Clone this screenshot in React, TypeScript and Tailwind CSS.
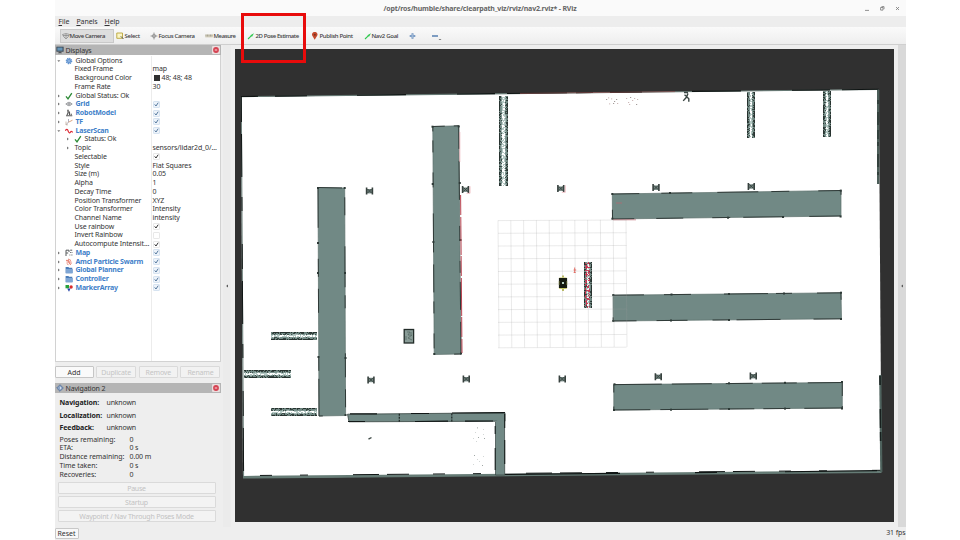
import React from "react";

type Row = {
  label: string;
  value?: string;
  check?: "blue" | "dark" | "empty";
  display?: boolean;
  arrow?: "open" | "closed";
  nested?: boolean;
  icon?: string;
  swatch?: boolean;
};

const rows: Row[] = [
  { label: "Global Options", arrow: "open", icon: "gear" },
  { label: "Fixed Frame", value: "map" },
  { label: "Background Color", value: "48; 48; 48", swatch: true },
  { label: "Frame Rate", value: "30" },
  { label: "Global Status: Ok", arrow: "closed", icon: "check" },
  { label: "Grid", arrow: "closed", icon: "grid", display: true, check: "blue" },
  { label: "RobotModel", arrow: "closed", icon: "robot", display: true, check: "blue" },
  { label: "TF", arrow: "closed", icon: "tf", display: true, check: "blue" },
  { label: "LaserScan", arrow: "open", icon: "laser", display: true, check: "blue" },
  { label: "Status: Ok", arrow: "closed", icon: "check", nested: true },
  { label: "Topic", arrow: "closed", nested: true, value: "sensors/lidar2d_0/..." },
  { label: "Selectable", check: "dark" },
  { label: "Style", value: "Flat Squares" },
  { label: "Size (m)", value: "0.05" },
  { label: "Alpha", value: "1" },
  { label: "Decay Time", value: "0" },
  { label: "Position Transformer", value: "XYZ" },
  { label: "Color Transformer", value: "Intensity" },
  { label: "Channel Name", value: "intensity" },
  { label: "Use rainbow", check: "dark" },
  { label: "Invert Rainbow", check: "empty" },
  { label: "Autocompute Intensit...", check: "dark" },
  { label: "Map", arrow: "closed", icon: "map", display: true, check: "blue" },
  { label: "Amcl Particle Swarm", arrow: "closed", icon: "swarm", display: true, check: "blue" },
  { label: "Global Planner", arrow: "closed", icon: "folder", display: true, check: "blue" },
  { label: "Controller", arrow: "closed", icon: "folder", display: true, check: "blue" },
  { label: "MarkerArray", arrow: "closed", icon: "markers", display: true, check: "blue" },
];

function RowIcon({ name }: { name: string }) {
  return (
    <svg viewBox="0 0 8 8" className="h-2 w-2 shrink-0" fill="none">
      {name === "gear" && (
        <>
          <circle cx="4" cy="4" r="2.7" stroke="#5b8fce" strokeWidth="1.2" strokeDasharray="1.3 .8" />
          <circle cx="4" cy="4" r="1.9" fill="#86aede" stroke="#5b8fce" />
        </>
      )}
      {name === "check" && <path d="M1 4.4 3 6.8 6.8 1.2" stroke="#2c8a35" strokeWidth="1.3" />}
      {name === "grid" && (
        <path d="M.8 4 4 2.1 7.2 4 4 5.9ZM2.4 3 5.6 5M5.6 3 2.4 5" stroke="#85888c" strokeWidth=".8" />
      )}
      {name === "robot" && (
        <>
          <path d="M3 1v3l-1 2M3 3h1.5v3" stroke="#555" strokeWidth="1.1" />
          <path d="M1 6.8h6.3M5.5 5.2h1.5" stroke="#555" strokeWidth="1.1" />
          <circle cx="3" cy="1.5" r=".9" fill="#777" />
        </>
      )}
      {name === "tf" && (
        <>
          <path d="M1 6.8 3.5 4V1" stroke="#a7a6b8" strokeWidth=".9" />
          <path d="M3.5 4.2 7.5 2.2" stroke="#d79a73" strokeWidth=".9" />
          <path d="M1 3.5v3.3h2" stroke="#bda58f" strokeWidth=".7" />
        </>
      )}
      {name === "laser" && (
        <path d="M.3 3.6C1.5 2 2.6 2 3 3.7S4.6 6.6 5.4 5.2 7 4.6 7.8 5.4" stroke="#dd2732" strokeWidth="1.2" />
      )}
      {name === "map" && (
        <path d="M1 7V1.2h3V3M1.2 4h2M5.2 1.2h2M5 3.5h.8M6.6 3.5h.8M4.5 6h.8M6.4 6h1" stroke="#55585a" strokeWidth="1" />
      )}
      {name === "swarm" && (
        <path d="M1 2.4h3M3 1l3 1.5M1.5 4h5M2 5.3l1.3 1.8M6.5 4.8 5 7M3.6 3l1 3" stroke="#e2705f" strokeWidth=".9" />
      )}
      {name === "folder" && (
        <>
          <path d="M.6 1h2.8l.7.8h3.2v5.4H.6Z" fill="#4a7cb9" />
          <path d="M1 3h6.8v4.2H1Z" fill="#7ea5d4" />
        </>
      )}
      {name === "markers" && (
        <>
          <path d="M.5 1h3.5v3.3H.5Z" fill="#26a13a" />
          <circle cx="6.1" cy="3" r="1.7" fill="#d92d2d" />
          <path d="M2.2 4.4h3.3L4 7.8Z" fill="#2443a8" />
        </>
      )}
    </svg>
  );
}

function Arrow({ open }: { open: boolean }) {
  return (
    <svg viewBox="0 0 4 4" className="h-1 w-1 shrink-0">
      <path d={open ? "M.3 1.3h3L1.8 3Z" : "M1 .5v3L2.8 2Z"} fill="#777" />
    </svg>
  );
}

function Check({ kind }: { kind: "blue" | "dark" | "empty" }) {
  return (
    <svg viewBox="0 0 7 7" className="h-[7px] w-[7px]" fill="none">
      <rect x=".5" y=".5" width="6" height="6" rx=".6" fill={kind === "blue" ? "#edf3fa" : "#fff"} stroke={kind === "blue" ? "#c9daec" : "#dedede"} strokeWidth=".7" />
      {kind !== "empty" && (
        <path d="M1.7 3.4 3 5 5.2 1.7" stroke={kind === "blue" ? "#55799e" : "#333"} strokeWidth="1" />
      )}
    </svg>
  );
}

function TreeRow({ row }: { row: Row }) {
  return (
    <div className="flex h-[8.74px] shrink-0 items-center">
      <div className={`flex h-full w-[96px] shrink-0 items-center border-r border-[#ececec] ${row.nested ? "pl-[10px]" : "pl-px"}`}>
        <div className="flex w-[8px] shrink-0 items-center">{row.arrow && <Arrow open={row.arrow === "open"} />}</div>
        {row.icon && <RowIcon name={row.icon} />}
        <span
          className={
            row.icon
              ? row.display
                ? "pl-[3px] font-bold tracking-[-0.22px] text-[#3f7fc9]"
                : "pl-[3px] tracking-[-0.17px]"
              : row.nested
                ? "pl-px tracking-[-0.1px]"
                : "pl-[10px] tracking-[-0.12px]"
          }
        >
          {row.label}
        </span>
      </div>
      <div className="flex items-center pl-px tracking-[-0.1px]">
        {row.check && <Check kind={row.check} />}
        {row.swatch && <span className="ml-px mr-[2px] h-[6px] w-[6px] bg-[#303030]" />}
        {row.value}
      </div>
    </div>
  );
}

function CloseBadge() {
  return (
    <svg viewBox="0 0 8 8" className="h-2 w-2">
      <rect width="8" height="8" rx="1" fill="#eadede" />
      <circle cx="4" cy="4" r="2.9" fill="#d54352" />
      <path d="M2.8 4h2.4" stroke="#f9dadd" strokeWidth="1" />
    </svg>
  );
}

function PanelHeader({ title, icon }: { title: string; icon: React.ReactNode }) {
  return (
    <div className="flex h-[10px] shrink-0 items-center justify-between bg-[#b5b5b5] pl-px pr-px">
      <div className="flex items-center gap-[2px]">
        {icon}
        <span className="pt-px tracking-[-0.15px]">{title}</span>
      </div>
      <CloseBadge />
    </div>
  );
}

function PoseArrow() {
  return (
    <svg viewBox="0 0 8 8" className="h-2 w-2 shrink-0">
      <path d="M1 7 4.5 3.6" stroke="#2dc84d" strokeWidth="1.1" />
      <path d="M3.4 3.2 7 1.2 5 4.7Z" fill="#2dc84d" />
    </svg>
  );
}

function makeRandom(seed: number) {
  let s = seed;
  return () => {
    s = (s * 16807) % 2147483647;
    return s / 2147483647;
  };
}

/* Patchy occupancy cells of a narrow rack, as seen by the lidar. */
function Rack({ x, y, w, h, seed, red }: { x: number; y: number; w: number; h: number; seed: number; red?: boolean }) {
  const rnd = makeRandom(seed * 7919);
  const vertical = h > w;
  const length = vertical ? h : w;
  const breadth = vertical ? w : h;
  const cells: React.ReactNode[] = [];
  for (let i = 0; i < length; i += 1) {
    for (let j = 0; j < breadth; j += 1) {
      const fromEdge = Math.min(j, breadth - 1 - j);
      const r = rnd();
      let fill = "";
      if (fromEdge === 0) fill = r < 0.68 ? "#27322f" : "#667d77";
      else if (fromEdge === 1) fill = r < 0.35 ? "#35433f" : "#728a85";
      else if (fromEdge === 2) fill = r < 0.2 ? "#3e4e4a" : r < 0.75 ? "#7c948f" : "#a9bbb7";
      else if (r < 0.45) fill = "#b4c9c4";
      if (red && fromEdge > 0 && j < breadth - 2 && rnd() < 0.34) fill = "#c93450";
      if (fill) {
        cells.push(
          <rect key={`${i}-${j}`} x={vertical ? x + j : x + i} y={vertical ? y + i : y + j} width="1" height="1" fill={fill} />,
        );
      }
    }
  }
  return <g>{cells}</g>;
}

function Post({ x, y, red }: { x: number; y: number; red?: boolean }) {
  return (
    <g transform={`translate(${x} ${y})`}>
      <rect x="-3" y="-2" width="6" height="4.4" fill="#71837f" />
      <path d="M-2.9 -3.4V3.6M2.9 -3.4V3.6" stroke="#37413e" strokeWidth="1.6" />
      <path d="M-2 -2 2 2M2 -2-2 2" stroke="#3c4945" strokeWidth="1" />
      {red && <path d="M1 3.8h3.5v-7" stroke="#e59aa2" strokeWidth=".6" fill="none" />}
    </g>
  );
}

function Shelf({ points, dash, corners }: { points: string; dash: string; corners: number[][] }) {
  return (
    <g>
      <polygon points={points} fill="#718985" stroke="#5c706b" strokeWidth=".7" />
      <polygon points={points} fill="none" stroke="#27312f" strokeWidth=".9" strokeDasharray={dash} />
      {corners.map(([x, y]) => (
        <rect key={`${x}-${y}`} x={x - 1} y={y - 1} width="2" height="2" fill="#2d3936" />
      ))}
    </g>
  );
}

const posts = [
  [369.5, 191], [465.5, 189.5, 1], [560.8, 188.5, 1], [656, 187.5], [751.3, 186.3],
  [371, 379.8], [466.3, 379], [562.3, 379], [658.3, 376.6], [753.3, 376],
];

const specks = [
  [606, 99], [608, 97.5], [611, 98.5], [613, 103], [609, 103.5], [617, 103], [616, 99], [626, 98], [628, 102],
  [630, 97], [632, 100], [634, 98], [636, 104], [637, 99], [629, 104], [614, 101],
];

const dust = [
  [477, 427.5], [483, 429], [475, 432], [478, 437], [483, 434], [473, 438], [474, 455], [483, 456], [479, 461],
  [482, 465], [473, 464], [477, 459], [484, 438], [476, 441],
];

function MapView() {
  const lines = Array.from({ length: 11 }, (_, i) => i);
  return (
    <svg viewBox="235 49 659 473" className="block h-[473px] w-[659px] bg-[#303030]" fill="none">
      <polygon points="241,97 878.8,89.3 881.5,471.5 243,478" fill="#fff" />
      <path d="M241 96.7 878.8 89.5" stroke="#657873" strokeWidth="1.1" />
      <path d="M241 96.5 878.8 89.3" stroke="#0f1413" strokeWidth="1.1" strokeDasharray="17 17 32 50 49 51 38 12 60 9" />
      <path d="M520 93.4 675 91.6" stroke="#8d4b4b" strokeWidth=".7" />
      <path d="M241.3 97 243.6 476" stroke="#6d817c" strokeWidth="1" />
      <path d="M241.3 97 243.6 476" stroke="#101514" strokeWidth="1" strokeDasharray="25 12 43 20 14 33" />
      <path d="M243 477.2 881.5 471.8" stroke="#657b75" strokeWidth="2.6" />
      <path d="M243 475.6 881 470.3" stroke="#101615" strokeWidth="1" strokeDasharray="0 17 12 28 8 45 26 8 22 7" />
      <path d="M505 474.4 620 473.4M695 472.6 717 472.4M785 471.8 877 470.6" stroke="#101615" strokeWidth="1.1" />
      <path d="M878.2 90v94" stroke="#4c5e59" strokeWidth="2.4" />
      <path d="M878 100v75" stroke="#1a2422" strokeWidth="1" strokeDasharray="4 8 13 5 9 3" />
      <path d="M880.3 375 881.3 472" stroke="#4e625d" strokeWidth="2.2" />
      <path d="M880 376 880.7 442" stroke="#17201e" strokeWidth="1.6" strokeDasharray="9 24 19 4" />

      <Shelf points="318,187.5 344.7,188 345.6,415.5 319,416" dash="24 12 18 31 41 8 13 45" corners={[[318, 188], [344.7, 188], [318.5, 357], [345.5, 358], [345, 273], [318, 273], [318, 243], [345.5, 415]]} />
      <Shelf points="432.8,126.5 458.7,125.8 461,354 434.2,354.5" dash="12 9 28 12 39 26 15 20" corners={[[432.5, 126.7], [458.7, 126.4], [432.7, 184], [459.8, 183], [460.5, 240], [433.4, 242], [461, 353.5], [434.3, 354]]} />
      <path d="M459.8 132v30" stroke="#e8a1a7" strokeWidth=".7" />
      <path d="M460.6 195 462 353" stroke="#b94350" strokeWidth="1" strokeDasharray="20 2 38 1" />
      <Shelf points="612.3,194 841,190.5 841,216 612.5,219" dash="27 22 31 25 41 13 18 29" corners={[[612.3, 194], [840.8, 190.6], [612.4, 218.7], [840.6, 216.5], [728, 217.7], [783, 217], [670, 193]]} />
      <path d="M613 219.8h23M616 203h6" stroke="#bd6570" strokeWidth=".7" />
      <Shelf points="613,295.2 841,292.8 841.5,318.8 613.2,321" dash="31 20 27 33 44 8 16 25" corners={[[613.3, 295], [841, 292.7], [613.3, 321], [841, 319], [671.5, 294.5], [729, 294], [784, 293.5], [671, 320.5], [729, 320]]} />
      <Shelf points="613.8,384.6 842.3,382.5 842.3,408 613.8,410" dash="48 10 40 14 27 9 35 11" corners={[[614.5, 384.3], [842, 382], [614, 410], [842, 408.5], [729, 383.3], [785, 382.8], [671, 409.7], [729, 409], [785, 408.6]]} />

      <polygon points="347.5,414.2 505,412.8 505,421.2 349,421.8" fill="#718985" stroke="#34413d" strokeWidth=".8" />
      <path d="M350 413.8H377M411 413.5H429M452 413 505 412.6M348 421.5H365M415 421.5 448 421.2M465 421.2 493 421" stroke="#121817" strokeWidth="1.2" />
      <path d="M399.3 413.8v8M451.8 413.4v8" stroke="#1c2523" strokeWidth="1.2" strokeDasharray="2 1" />
      <path d="M495.5 422v53h9.2l-.2-62" fill="#718985" stroke="#34413d" strokeWidth=".7" />
      <path d="M495.2 426v8M495.2 448v22M504.7 414v14M504.7 440v24" stroke="#19211f" strokeWidth="1.1" />

      <Rack x={499} y={96} w={9} h={90} seed={17} />
      <Rack x={747} y={92} w={8} h={46} seed={92} />
      <Rack x={823} y={91} w={8} h={46} seed={239} />
      <Rack x={271} y={332} w={46} h={8} seed={419} />
      <Rack x={244} y={370} w={47} h={8} seed={555} />
      <Rack x={271} y={408} w={46} h={8} seed={871} />
      <Rack x={584} y={262} w={8} h={46} seed={331} red />

      {posts.map(([x, y, r]) => (
        <Post key={`${x}-${y}`} x={x} y={y} red={Boolean(r)} />
      ))}

      <rect x="404.2" y="329.5" width="9.4" height="13.5" fill="#899c97" stroke="#222c29" strokeWidth="1.3" />
      <path d="M407 332h3l-2 3h4l-4 3 4 2M406 336v4M411 332v2" stroke="#52645f" strokeWidth=".7" />
      <path d="M684 92.5h4M688 93.5l-1.6 3.8-3.2 3.6M687 97l1.8 1.7v3M684.5 94.8l2.5 2" stroke="#3a4643" strokeWidth="1.4" />
      <path d="M368.5 439.2 371.5 437.5" stroke="#3f4b47" strokeWidth="1.4" />
      {specks.map(([x, y], i) => (
        <rect key={`s${i}`} x={x} y={y} width="1.2" height=".8" fill={i % 3 ? "#c1a7a7" : "#8d8280"} />
      ))}
      {dust.map(([x, y], i) => (
        <rect key={`d${i}`} x={x} y={y} width="1" height=".8" fill={i % 3 ? "#c9cecc" : "#89928f"} />
      ))}

      <g stroke="#a0a0a0" strokeOpacity=".28" strokeWidth=".8">
        {lines.map((i) => (
          <path key={i} d={`M${498 + i * 12.8} ${220.5 - i * 0.08}l1 127.2M498 ${220.6 + i * 12.72}l128.6 -.6`} />
        ))}
      </g>
      <path d="M574.7 267.5v5M573.6 270h2.6M573.7 272.5h2" stroke="#df655b" strokeWidth=".9" />
      <rect x="559" y="277.5" width="8" height="11.5" rx="1" fill="#c8ca69" />
      <path d="M563 275.5v2M563 289v2" stroke="#b9b968" strokeWidth="2" />
      <path d="M558.9 278h8.2v10h-8.2Z" fill="#171c12" />
      <path d="M559.2 281v4M566.8 281v4" stroke="#8b9048" strokeWidth=".6" />
      <rect x="562" y="282" width="2" height="2" fill="#b9d1c5" />
    </svg>
  );
}

function TitleBar() {
  return (
    <div className="grid h-[16px] shrink-0 grid-cols-[1fr_auto_1fr] items-center bg-[#fafafa] pt-px text-[#666]">
      <div />
      <div className="text-[7px] font-bold tracking-[-0.18px]">/opt/ros/humble/share/clearpath_viz/rviz/nav2.rviz* - RViz</div>
      <svg viewBox="0 0 45 10" className="h-[10px] w-[45px] justify-self-end" fill="none" stroke="#777" strokeWidth=".8">
        <path d="M4 6.4h4M35 3l3 3M38 3l-3 3" />
        <path d="M19.6 3.5h2.4v2.6h-2.4ZM20.5 2.6h2.5v2.5" />
      </svg>
    </div>
  );
}

function MenuBar() {
  return (
    <div className="flex h-[11px] shrink-0 items-center gap-[7px] bg-[#ededed] pl-[4px] pt-px tracking-[-0.08px]">
      <span><u>F</u>ile</span>
      <span><u>P</u>anels</span>
      <span><u>H</u>elp</span>
    </div>
  );
}

function Toolbar() {
  return (
    <div className="flex h-[18px] shrink-0 items-center border-b border-[#cfcfcf] bg-gradient-to-b from-[#fafafa] to-[#eeeeee] pl-[5px] text-[6px] font-medium leading-none text-[#3c3c3c]">
      <div className="flex h-[14px] w-[54px] items-center border border-[#c9c9c9] bg-[#dedede] pl-px">
        <svg viewBox="0 0 8 8" className="h-2 w-2" fill="none" stroke="#8b8b8b" strokeWidth=".8"><path d="M.5 2.5 4 1.5l3.5 1L6 5 4 7 2 5ZM1 3.5h6M4 2v4" /></svg>
        <span className="tracking-[-0.36px]">Move Camera</span>
      </div>
      <div className="flex w-[36px] items-center gap-px pl-[2px]">
        <svg viewBox="0 0 8 8" className="h-2 w-2" fill="none"><path d="M.8 1h5.7v5.3H.8Z" fill="#fbf5c4" stroke="#b9a53a" strokeWidth=".9" /><path d="M4.8 4.3 7.5 7" stroke="#555" /></svg>
        <span className="tracking-[-0.3px]">Select</span>
      </div>
      <div className="flex w-[55px] items-center">
        <svg viewBox="0 0 8 8" className="mr-px h-2 w-2" fill="none" stroke="#939393"><path d="M4 .6v6.8M.6 4h6.8" strokeWidth="1" /><circle cx="4" cy="4" r="1.7" strokeWidth=".8" /></svg>
        <span className="tracking-[-0.34px]">Focus Camera</span>
      </div>
      <div className="flex w-[42px] items-center">
        <svg viewBox="0 0 8 8" className="h-2 w-2" fill="none"><path d="M.3 2.5h7.4v3H.3Z" fill="#d8d3c2" /><path d="M1 2.5v2M2.5 2.5v2M4 2.5v2M5.5 2.5v2M7 2.5v2" stroke="#8a8675" strokeWidth=".6" /></svg>
        <span className="pl-px tracking-[-0.4px]">Measure</span>
      </div>
      <div className="flex w-[64px] items-center"><PoseArrow /><span className="pl-px tracking-[-0.4px]">2D Pose Estimate</span></div>
      <div className="flex w-[53px] items-center">
        <svg viewBox="0 0 8 8" className="h-2 w-2"><path d="M3.7 7.8 1.5 4.1A2.7 2.7 0 1 1 6 4.1Z" fill="#c4492d" /><circle cx="3.8" cy="2.7" r="1" fill="#793323" /></svg>
        <span className="pl-px tracking-[-0.34px]">Publish Point</span>
      </div>
      <div className="flex w-[44px] items-center"><PoseArrow /><span className="tracking-[-0.3px]">Nav2 Goal</span></div>
      <svg viewBox="0 0 34 8" className="h-2 w-[34px]" fill="none">
        <path d="M4.5 1.2v5.6M1.7 4h5.6" stroke="#7596bf" strokeWidth="2" /><path d="M4.5 2v4M2.5 4h4" stroke="#a9c1de" strokeWidth=".7" />
        <path d="M24 4h6" stroke="#5f86b4" strokeWidth="1.6" /><path d="M30.5 7h3L32 8Z" fill="#555" />
      </svg>
    </div>
  );
}

const panelButton = "flex items-center justify-center rounded-[1px] border leading-none";

export default function App() {
  return (
    <div className="relative flex h-[540px] w-[960px] justify-center overflow-hidden bg-white font-['Noto_Sans',sans-serif] text-[7px] leading-[8px] text-[#333] whitespace-nowrap">
      <div className="flex h-full w-[851px] flex-col bg-[#eeeeee]">
        <TitleBar />
        <MenuBar />
        <Toolbar />
        <div className="flex h-[482px] shrink-0">
          <div className="flex w-[166px] shrink-0 flex-col">
            <PanelHeader
              title="Displays"
              icon={<svg viewBox="0 0 8 8" className="h-2 w-2"><path d="M.4.7h7.2v5H.4Z" fill="#374451" /><path d="M1.3 1.5h5.3v3.2H1.3Z" fill="#6795b7" /><path d="M2 7.3h4L5 5.7H3Z" fill="#4e5357" /></svg>}
            />
            <div className="flex h-[307px] shrink-0 flex-col border border-t-0 border-[#d2d2d2] bg-white pt-[1.4px]">
              {rows.map((row) => <TreeRow key={row.label} row={row} />)}
              <div className="w-[96px] grow border-r border-[#ececec]" />
            </div>
            <div className="mt-[4px] flex h-[12px] shrink-0 justify-between">
              <div className={`${panelButton} w-[39px] border-[#c6c6c6] bg-[#fafafa] text-[#333]`}>Add</div>
              <div className={`${panelButton} w-[40px] border-[#dadada] bg-[#f2f2f2] tracking-[-0.15px] text-[#c4c4c4]`}>Duplicate</div>
              <div className={`${panelButton} w-[39px] border-[#dadada] bg-[#f2f2f2] tracking-[-0.15px] text-[#c4c4c4]`}>Remove</div>
              <div className={`${panelButton} w-[40px] border-[#dadada] bg-[#f2f2f2] tracking-[-0.15px] text-[#c4c4c4]`}>Rename</div>
            </div>
            <div className="mt-[5px] flex flex-col">
              <PanelHeader
                title="Navigation 2"
                icon={<svg viewBox="0 0 8 8" className="h-2 w-2"><path d="M4 .7 7.3 4 4 7.3.7 4Z" fill="#8ba3c4" stroke="#516d98" strokeWidth=".8" /><path d="M4 2.5 5.5 4 4 5.5" fill="#dce4ef" /></svg>}
              />
            </div>
            <div className="flex flex-col pl-[5px] pt-[4px]">
              {["Navigation:", "Localization:", "Feedback:"].map((label) => (
                <div key={label} className="flex h-[12.4px] items-center">
                  <span className="w-[47px] font-bold tracking-[-0.1px] text-[#222]">{label}</span><span className="tracking-[-0.18px]">unknown</span>
                </div>
              ))}
              <div className="flex flex-col pt-[1px]">
                {[["Poses remaining:", "0"], ["ETA:", "0 s"], ["Distance remaining:", "0.00 m"], ["Time taken:", "0 s"], ["Recoveries:", "0"]].map(([label, value]) => (
                  <div key={label} className="flex h-[8.8px] items-center"><span className="w-[70px] tracking-[-0.05px]">{label}</span><span className="tracking-[-0.1px]">{value}</span></div>
                ))}
              </div>
            </div>
            <div className="mt-[3px] flex flex-col gap-[2px] pl-[3px] pr-[5px]">
              {["Pause", "Startup", "Waypoint / Nav Through Poses Mode"].map((label) => (
                <div key={label} className={`${panelButton} h-[12px] border-[#dadada] bg-[#f3f3f3] tracking-[-0.22px] text-[#c2c2c2]`}>{label}</div>
              ))}
            </div>
          </div>
          <div className="flex w-[14px] shrink-0 items-center justify-center pr-[2px]">
            <div className="flex h-full w-[8px] items-center justify-center bg-[#ebebeb]">
              <svg viewBox="0 0 4 4" className="h-1 w-1"><path d="M3 .4v3.2L1.1 2Z" fill="#555" /></svg>
            </div>
          </div>
          <div className="pt-[4px]"><MapView /></div>
          <div className="ml-auto flex w-[8px] items-center justify-center bg-[#d9d9d9]">
            <svg viewBox="0 0 4 4" className="h-1 w-1"><path d="M3 .4v3.2L1.1 2Z" fill="#555" /></svg>
          </div>
        </div>
        <div className="flex h-[13px] items-center justify-between">
          <div className={`${panelButton} h-[11px] w-[24px] border-[#c8c8c8] bg-[#f8f8f8]`}>Reset</div>
          <span className="pb-[2px] tracking-[-0.1px]">31 fps</span>
        </div>
      </div>
      <div className="absolute left-[241px] top-[13px] h-[50px] w-[65px] border-[3px] border-[#e80b0b]" />
    </div>
  );
}
